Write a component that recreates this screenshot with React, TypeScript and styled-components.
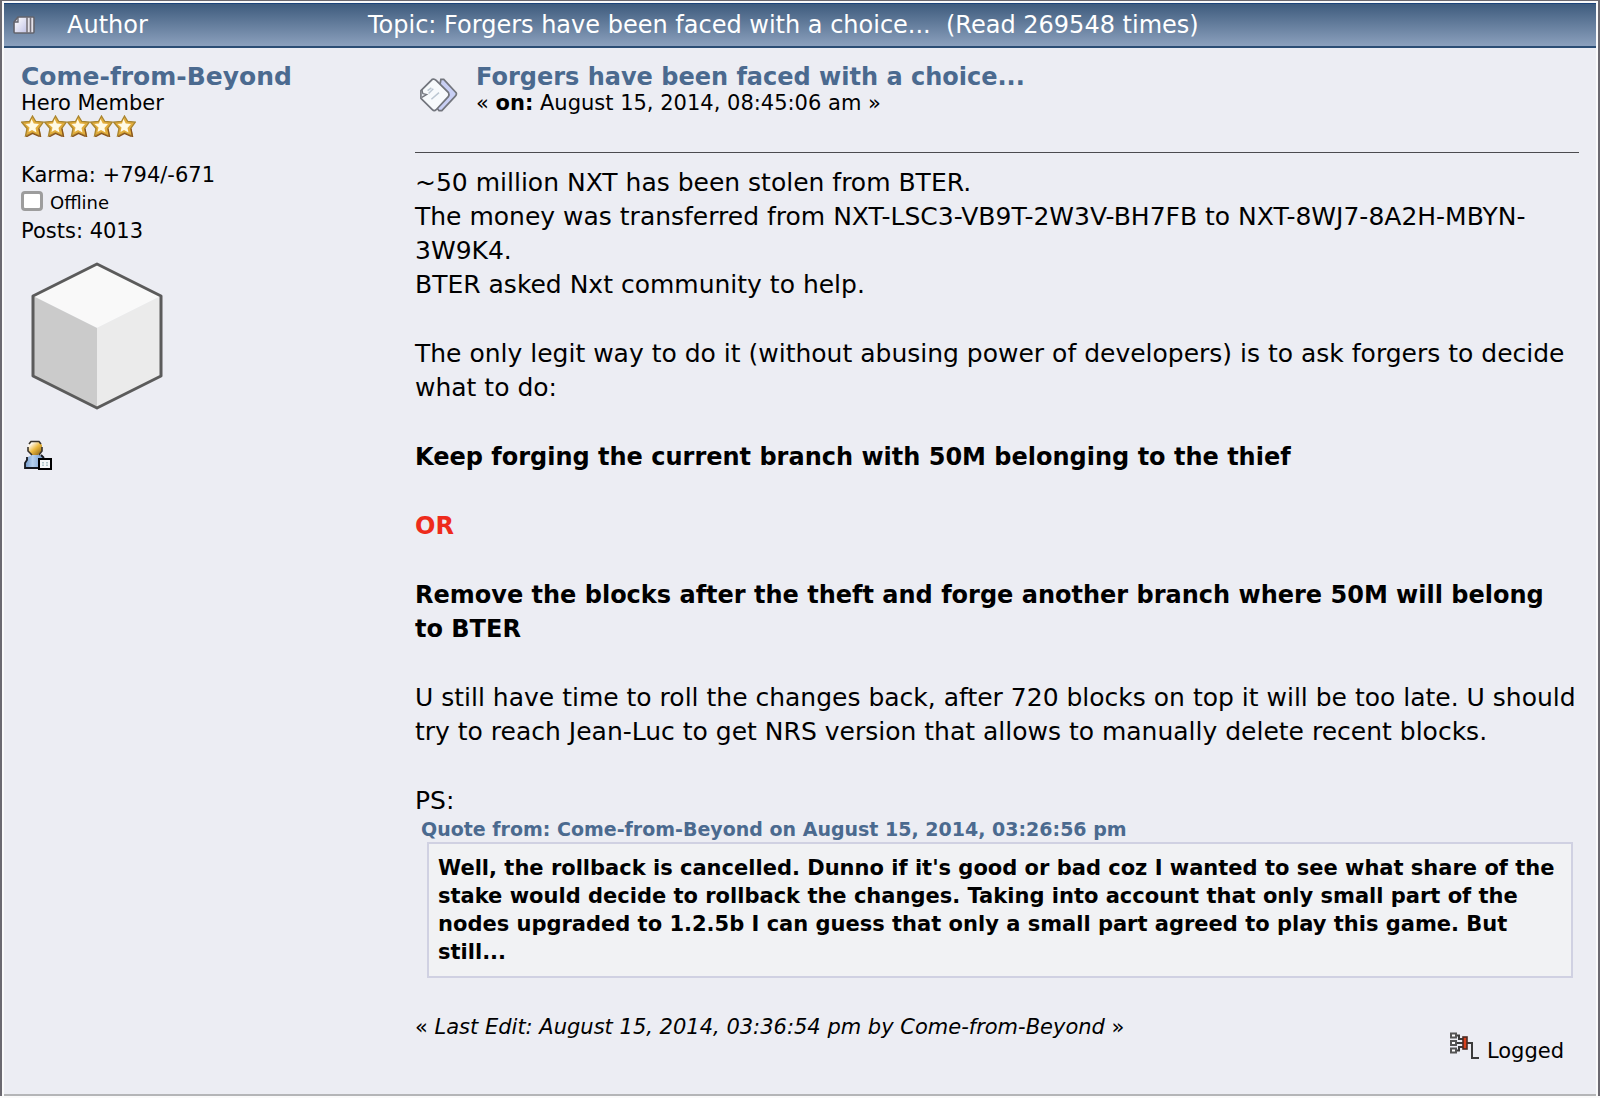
import React from "react";
import styled, { createGlobalStyle } from "styled-components";

const Global = createGlobalStyle`
  *, *::before, *::after { box-sizing: border-box; }
  body {
    margin: 0;
    background: #fafafa;
    color: #000;
    font-family: Verdana, "DejaVu Sans", sans-serif;
    font-size: 21px;
    line-height: 24px;
  }
`;

const Frame = styled.main`
  border: 2px solid #6b6970;
  border-top-width: 1px;
  border-bottom: 0;
  padding: 2px 2px 0;
  background: #fafafa;
`;

const TitleBar = styled.header`
  display: flex;
  align-items: center;
  height: 45px;
  padding: 0 9px;
  border-top: 1px solid #1c447a;
  border-bottom: 2px solid #2b4d74;
  background: linear-gradient(#3f5c7e, #8ba0bd);
  color: #fff;
  font-size: 24px;
`;

const BarIcon = styled.svg`
  width: 22px;
  height: 20px;
  flex: none;
`;

const AuthorLabel = styled.span`
  width: 301px;
  margin-left: 32px;
  flex: none;
`;

const TopicLabel = styled.h1`
  margin: 0;
  font-size: 24px;
  font-weight: 400;
  white-space: pre-wrap;
`;

const Post = styled.article`
  display: grid;
  grid-template-columns: 394px minmax(0, 1fr);
  padding: 15px 9px 31px 17px;
  background: #ecedf3;
  border-bottom: 2px solid #b4b5b7;
`;

const Member = styled.aside`
  display: flex;
  flex-direction: column;
  align-items: flex-start;
`;

const BoldLink = styled.a<{ $size: number }>`
  color: #4b6a8f;
  font-size: ${(p) => p.$size}px;
  font-weight: 700;
  line-height: 28px;
  text-decoration: none;
`;

const Stars = styled.div`
  display: flex;
  height: 22px;
  margin-bottom: 26px;
`;

const StarSvg = styled.svg`
  width: 23px;
  height: 22px;
`;

const Status = styled.div`
  display: flex;
  align-items: center;
  gap: 7px;
  height: 32px;
  font-size: 18px;
`;

const StatusBox = styled.span`
  width: 22px;
  height: 20px;
  margin-bottom: 4px;
  border: 3px solid #9d9d9d;
  border-radius: 4px;
  background: #fff;
`;

const Cube = styled.svg`
  width: 152px;
  height: 152px;
  margin: 16px 0 28px;
`;

const ProfileLink = styled.a`
  display: block;
  height: 32px;
`;

const Body = styled.div`
  display: flex;
  flex-direction: column;
  min-width: 0;
`;

const PostHead = styled.div`
  display: flex;
  gap: 18px;
  height: 90px;
  margin-right: 8px;
  padding-left: 5px;
  border-bottom: 1px solid #4b4b4f;
`;

const TopicIcon = styled.svg`
  width: 38px;
  height: 36px;
  margin-top: 14px;
`;

const Subject = styled.h2`
  margin: 0;
  font-size: 24px;
  line-height: 28px;
`;

const Message = styled.div`
  display: flex;
  flex-direction: column;
  gap: 35px;
  padding-top: 13px;
  line-height: 34px;
`;

const Paragraph = styled.p<{ $bold?: boolean; $color?: string }>`
  margin: 0;
  font-size: ${(p) => (p.$bold ? 24 : 25)}px;
  font-weight: ${(p) => (p.$bold ? 700 : 400)};
  color: ${(p) => p.$color ?? "#000"};
`;

const QuoteSource = styled.a`
  margin-left: 6px;
  color: #4b6a8f;
  font-size: 19px;
  font-weight: 700;
  line-height: 22px;
  text-decoration: none;
`;

const Quote = styled.blockquote`
  margin: 2px 14px 0 12px;
  padding: 10px 9px;
  border: 2px solid #d0d1e2;
  background: #f1f2f4;
  font-size: 21px;
  font-weight: 700;
  line-height: 28px;
`;

const PostFoot = styled.footer`
  display: flex;
  justify-content: space-between;
  align-items: flex-start;
  margin-top: 37px;
  padding-right: 23px;
`;

const Logged = styled.div`
  display: flex;
  align-items: flex-end;
  gap: 8px;
  margin-top: 17px;
`;

const LoggedIcon = styled.svg`
  width: 29px;
  height: 28px;
  margin-bottom: 3px;
`;

function Star() {
  return (
    <StarSvg viewBox="0 0 23 22">
      <path d="M11.5 1 14.8 6.5 22.3 7.2 17.8 13.3 19.5 21 11.5 18 4.5 21 6 13.5 0.7 7.2 8.5 6.5Z" fill="#e2ad3c" stroke="#a8842f" strokeWidth="1.3" />
      <path d="M19.5 22 18 13.5M5 22 11.5 18.5 18.5 21.5" fill="none" stroke="#8a531b" strokeWidth="1.2" />
      <path d="M10.5 4 12.8 8.5 18 9 14.5 13 15.5 17.5 11 15 7.5 17 8.5 12.5 4.5 9 9 8.5Z" fill="#fffae4" />
    </StarSvg>
  );
}

export default function App() {
  return (
    <>
      <Global />
      <Frame>
        <TitleBar>
          <BarIcon viewBox="0 0 22 20" aria-hidden="true">
            <defs>
              <linearGradient id="page" x1="0" y1="0" x2="1" y2="1">
                <stop offset="0" stopColor="#fff" />
                <stop offset="1" stopColor="#c5c6e8" />
              </linearGradient>
            </defs>
            <path d="M5 2H20Q21 2 21 3V17Q21 18 20 18H2Q1 18 1 17V7Z" fill="#e4e2ea" stroke="#62636c" strokeWidth="1.6" />
            <path d="M5 3H13V17H2V7H5Z" fill="url(#page)" />
            <path d="M14 2V18M17.5 2V18" stroke="#77737c" strokeWidth="1.6" />
            <path d="M1 7H5V2" fill="none" stroke="#62636c" strokeWidth="1.3" />
          </BarIcon>
          <AuthorLabel>Author</AuthorLabel>
          <TopicLabel>{"Topic: Forgers have been faced with a choice...  (Read 269548 times)"}</TopicLabel>
        </TitleBar>
        <Post>
          <Member>
            <BoldLink $size={25} href="#member">
              Come-from-Beyond
            </BoldLink>
            <span>Hero Member</span>
            <Stars role="img" aria-label="5 stars">
              {[0, 1, 2, 3, 4].map((n) => (
                <Star key={n} />
              ))}
            </Stars>
            <span>Karma: +794/-671</span>
            <Status>
              <StatusBox />
              <span>Offline</span>
            </Status>
            <span>Posts: 4013</span>
            <Cube viewBox="0 0 152 152" role="img" aria-label="Avatar">
              <path d="M76 5 140 37 76 69 12 37Z" fill="#f9f9f9" />
              <path d="M12 37 76 69V149L12 117Z" fill="#cbcbcb" />
              <path d="M140 37 76 69V149L140 117Z" fill="#ebebeb" />
              <path d="M76 5 140 37V117L76 149 12 117V37Z" fill="none" stroke="#5b5b5b" strokeWidth="3" strokeLinejoin="round" />
            </Cube>
            <ProfileLink href="#profile" aria-label="View profile">
              <svg width="32" height="32" viewBox="0 0 32 32">
                <defs>
                  <linearGradient id="face" x1="0" y1="0" x2="0.9" y2="1">
                    <stop offset="0.2" stopColor="#fffaf0" />
                    <stop offset="0.55" stopColor="#ecb93f" />
                    <stop offset="1" stopColor="#8d6516" />
                  </linearGradient>
                  <linearGradient id="shirt" x1="0" y1="0" x2="1" y2="0">
                    <stop offset="0" stopColor="#6f96c8" />
                    <stop offset="0.4" stopColor="#b5d0ee" />
                    <stop offset="1" stopColor="#6f96c8" />
                  </linearGradient>
                </defs>
                <path d="M4 29V24L7 18 11 16H19L23 20V29Z" fill="url(#shirt)" />
                <path d="M6 18V21L4 24V29H17M20 16 23 19" fill="none" stroke="#15181f" strokeWidth="1.8" />
                <path d="M10 2.5H18L21 6V12L17 16H11L7 12V6Z" fill="url(#face)" />
                <path d="M8 5 10 2.5H18L20 5M7 8V12L11 16M21 8V12L18 16" fill="none" stroke="#39332b" strokeWidth="1.6" />
                <rect x="18" y="20" width="12" height="10" fill="#f4f8f8" stroke="#000" strokeWidth="2" />
                <path d="M22 23V27M26 23V27" stroke="#9bb7bb" strokeWidth="1.5" strokeDasharray="1.5 1" />
              </svg>
            </ProfileLink>
          </Member>
          <Body>
            <PostHead>
              <TopicIcon viewBox="1 0 40 37" aria-hidden="true">
                <path d="M23 2H26L39 16Q40 18 38 20L24 35H21L18 31Z" fill="#c8cff4" stroke="#72757d" strokeWidth="1.8" />
                <path d="M14 2Q16 1 18 3L31 16Q32 18 31 20L18 34Q16 36 14 34L2 22V14Z" fill="#f7fafc" stroke="#72757d" strokeWidth="1.8" />
                <path d="M3 13 4 17 8 18 3 21" fill="#e3e8ee" stroke="#72757d" strokeWidth="1.4" />
                <path d="M9 14 13 11M10 17 15 12M13 23 21 16" stroke="#bcc7d2" strokeWidth="1.6" />
              </TopicIcon>
              <div>
                <Subject>
                  <BoldLink $size={24} href="#topic">
                    Forgers have been faced with a choice...
                  </BoldLink>
                </Subject>
                <div>
                  « <b>on:</b> August 15, 2014, 08:45:06 am »
                </div>
              </div>
            </PostHead>
            <Message>
              <Paragraph>
                ~50 million NXT has been stolen from BTER.
                <br />
                The money was transferred from NXT-LSC3-VB9T-2W3V-BH7FB to NXT-8WJ7-8A2H-MBYN-3W9K4.
                <br />
                BTER asked Nxt community to help.
              </Paragraph>
              <Paragraph>
                The only legit way to do it (without abusing power of developers) is to ask forgers to decide what to do:
              </Paragraph>
              <Paragraph $bold>Keep forging the current branch with 50M belonging to the thief</Paragraph>
              <Paragraph $bold $color="#ee2b1c">
                OR
              </Paragraph>
              <Paragraph $bold>
                Remove the blocks after the theft and forge another branch where 50M will belong
                <br />
                to BTER
              </Paragraph>
              <Paragraph>
                U still have time to roll the changes back, after 720 blocks on top it will be too late. U should try to
                reach Jean-Luc to get NRS version that allows to manually delete recent blocks.
              </Paragraph>
              <Paragraph>PS:</Paragraph>
            </Message>
            <QuoteSource href="#quote">Quote from: Come-from-Beyond on August 15, 2014, 03:26:56 pm</QuoteSource>
            <Quote>
              Well, the rollback is cancelled. Dunno if it's good or bad coz I wanted to see what share of the stake
              would decide to rollback the changes. Taking into account that only small part of the nodes upgraded to
              1.2.5b I can guess that only a small part agreed to play this game. But still...
            </Quote>
            <PostFoot>
              <span>
                « <i>Last Edit: August 15, 2014, 03:36:54 pm by Come-from-Beyond</i> »
              </span>
              <Logged>
                <LoggedIcon viewBox="0 0 29 28" aria-hidden="true">
                  <path d="M6 3.5H9V7H13M6 11H13M6 18.5H9V15H13M17 11H22V26H29" fill="none" stroke="#3b3b3b" strokeWidth="2" />
                  <g fill="#fff" stroke="#555" strokeWidth="2">
                    <rect x="1" y="1.5" width="5" height="4" />
                    <rect x="1" y="9" width="5" height="4" />
                    <rect x="1" y="16.5" width="5" height="4" />
                  </g>
                  <rect x="13" y="5" width="4" height="12" fill="#d9401c" stroke="#4b2a22" strokeWidth="1.6" />
                </LoggedIcon>
                <span>Logged</span>
              </Logged>
            </PostFoot>
          </Body>
        </Post>
      </Frame>
    </>
  );
}
